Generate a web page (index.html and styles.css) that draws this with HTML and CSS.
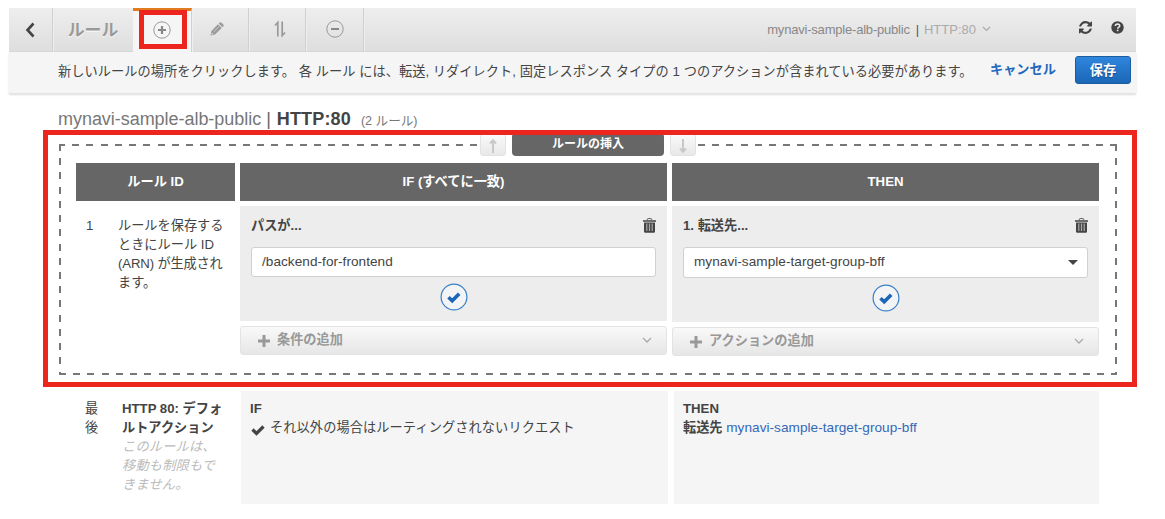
FILE: index.html
```html
<!DOCTYPE html>
<html lang="ja">
<head>
<meta charset="utf-8">
<title>ルール</title>
<link rel="stylesheet" href="styles.css">
</head>
<body>
<div class="page">
  <header class="toolbar">
    <div class="tab tab-back"><svg width="12" height="18" viewBox="0 0 12 18"><path d="M9.500 2.500 3.500 9l6 6.500" fill="none" stroke="#444" stroke-width="2.600"/></svg></div>
    <div class="tab tab-title">ルール</div>
    <div class="tab tab-active">
      <svg width="20" height="20" viewBox="0 0 20 20"><circle cx="10" cy="10" r="8.200" fill="none" stroke="#999" stroke-width="1"/><path d="M10 6v8M6 10h8" stroke="#888" stroke-width="2.200"/></svg>
      <span class="mark mark-tab"></span>
    </div>
    <div class="tab tab-edit"><svg width="14" height="14" viewBox="0 0 14 14"><path d="M.5 13.500 1.500 9 8 2.300 11.700 6 5 12.500z" fill="#999"/><path d="m8.800 1.600 1-1q.8-.6 1.600.1l1.900 1.900q.7.800.1 1.600l-1 1z" fill="#999"/><path d="M3.700 9.800 9 4.500" stroke="#ddd" stroke-width=".8"/><path d="m1.700 11.300 1 1" stroke="#eee" stroke-width="1.200"/></svg></div>
    <div class="tab tab-sort"><svg width="14" height="18" viewBox="0 0 14 18"><path d="M4.800 16.500V2.500L2 5.500M9.200 1.500v14l2.800-3" fill="none" stroke="#999" stroke-width="1.700"/></svg></div>
    <div class="tab tab-remove"><svg width="20" height="20" viewBox="0 0 20 20"><circle cx="10" cy="10" r="8.200" fill="none" stroke="#999" stroke-width="1"/><path d="M6 10h8" stroke="#888" stroke-width="2"/></svg></div>
    <div class="listener">
      <span class="lb">mynavi-sample-alb-public</span><span class="bar">|</span><span class="port">HTTP:80</span>
      <svg width="9" height="6" viewBox="0 0 9 6"><path d="m1 1 3.500 3.500L8 1" fill="none" stroke="#aaa" stroke-width="1.200"/></svg>
    </div>
    <svg class="refresh" width="13" height="13" viewBox="0 0 1536 1536"><path fill="#444" d="M1511 928q0 5-1 7-64 268-268 434.500t-478 166.500q-146 0-282.500-55t-243.500-157l-129 129q-19 19-45 19t-45-19-19-45v-448q0-26 19-45t45-19h448q26 0 45 19t19 45-19 45l-137 137q71 66 161 102t187 36q134 0 250-65t186-179q11-17 53-117 8-23 30-23h192q13 0 22.500 9.500t9.500 22.500zm25-800v448q0 26-19 45t-45 19h-448q-26 0-45-19t-19-45 19-45l138-138q-148-137-349-137-134 0-250 65t-186 179q-11 17-53 117-8 23-30 23h-199q-13 0-22.500-9.500t-9.500-22.500v-7q65-268 270-434.500t480-166.500q146 0 284 55.500t245 156.500l130-129q19-19 45-19t45 19 19 45z"/></svg>
    <svg class="help" width="13" height="13" viewBox="0 0 13 13"><circle cx="6.500" cy="6.500" r="6.200" fill="#444"/><path d="M4.300 5q.2-2 2.300-2 2.100.1 2.100 1.800 0 1-1.100 1.600-.9.500-.9 1.300" fill="none" stroke="#e9e9e9" stroke-width="1.600"/><path d="M5.800 8.700h1.700v1.500H5.800z" fill="#e9e9e9"/></svg>
  </header>

  <section class="notice">
    <p class="notice-text">新しいルールの場所をクリックします。 各 ルール には、転送, リダイレクト, 固定レスポンス タイプの 1 つのアクションが含まれている必要があります。</p>
    <a class="cancel">キャンセル</a>
    <button class="save">保存</button>
  </section>

  <h1 class="title"><span class="title-name">mynavi-sample-alb-public</span><span class="title-bar">|</span><b>HTTP:80</b><small>(2 ルール)</small></h1>

  <section class="insert">
    <span class="mark mark-insert"></span>
    <div class="insert-head">
      <span class="move"><svg width="10" height="16" viewBox="0 0 10 16"><path d="M5 15V2.500M2 5.500 5 2.300l3 3.200" fill="none" stroke="#c8c8c8" stroke-width="2"/></svg></span>
      <span class="insert-label">ルールの挿入</span>
      <span class="move"><svg width="10" height="16" viewBox="0 0 10 16"><path d="M5 1v12.500M2 10.500l3 3.200 3-3.200" fill="none" stroke="#c8c8c8" stroke-width="2"/></svg></span>
    </div>
    <div class="cols heads">
      <div>ルール ID</div><div>IF (すべてに一致)</div><div>THEN</div>
    </div>
    <div class="cols">
      <div class="rule-id"><span class="num">1</span><p>ルールを保存する<br>ときにルール ID<br><span class="arn">(ARN) が生成され</span><br>ます。</p></div>
      <div class="stack">
        <div class="editor">
          <div class="editor-top"><b>パスが...</b>
            <svg class="trash" width="13" height="15" viewBox="0 0 13 15"><path d="M4.300 2.200V1.500q0-.9.900-.9h2.600q.9 0 .9.900v.7" fill="none" stroke="#555"/><path d="M0 2.300h13v1.500H0zM1 4.500h11v9q0 1.200-1.200 1.200H2.200Q1 14.700 1 13.500z" fill="#444"/><path d="M3.800 5.500v7.500M6.500 5.500v7.500M9.200 5.500v7.500" stroke="#aaa" stroke-width="1.200"/></svg>
          </div>
          <div class="field">/backend-for-frontend</div>
          <svg class="confirm" width="28" height="28" viewBox="0 0 28 28"><circle cx="14" cy="14" r="12.900" fill="#f3f4f5" stroke="#3a80c8" stroke-width="1.200"/><path d="m8.500 14.200 3.700 3.500 7-7" fill="none" stroke="#1c67b8" stroke-width="3.600"/></svg>
        </div>
        <div class="add"><svg width="12" height="12" viewBox="0 0 12 12"><path d="M6 0v12M0 6h12" stroke="#999" stroke-width="3"/></svg><span>条件の追加</span><svg class="chev" width="10" height="7" viewBox="0 0 10 7"><path d="m1 1 4 4 4-4" fill="none" stroke="#aaa" stroke-width="1.300"/></svg></div>
      </div>
      <div class="stack stack-then">
        <div class="editor">
          <div class="editor-top"><b>1. 転送先...</b>
            <svg class="trash" width="13" height="15" viewBox="0 0 13 15"><path d="M4.300 2.200V1.500q0-.9.900-.9h2.600q.9 0 .9.900v.7" fill="none" stroke="#555"/><path d="M0 2.300h13v1.500H0zM1 4.500h11v9q0 1.200-1.200 1.200H2.200Q1 14.700 1 13.500z" fill="#444"/><path d="M3.800 5.500v7.500M6.500 5.500v7.500M9.200 5.500v7.500" stroke="#aaa" stroke-width="1.200"/></svg>
          </div>
          <div class="field">mynavi-sample-target-group-bff<span class="caret"></span></div>
          <svg class="confirm" width="28" height="28" viewBox="0 0 28 28"><circle cx="14" cy="14" r="12.900" fill="#f3f4f5" stroke="#3a80c8" stroke-width="1.200"/><path d="m8.500 14.200 3.700 3.500 7-7" fill="none" stroke="#1c67b8" stroke-width="3.600"/></svg>
        </div>
        <div class="add"><svg width="12" height="12" viewBox="0 0 12 12"><path d="M6 0v12M0 6h12" stroke="#999" stroke-width="3"/></svg><span>アクションの追加</span><svg class="chev" width="10" height="7" viewBox="0 0 10 7"><path d="m1 1 4 4 4-4" fill="none" stroke="#aaa" stroke-width="1.300"/></svg></div>
      </div>
    </div>
  </section>

  <section class="last">
    <div class="last-id"><span class="last-num">最<br>後</span><p><b>HTTP 80: デフォ<br>ルトアクション</b><br><em>このルールは、<br>移動も制限もで<br>きません。</em></p></div>
    <div class="last-cell"><b>IF</b><br><svg width="14" height="12" viewBox="0 0 14 12"><path d="m1.500 5.500 4 4L12.500 2.500" fill="none" stroke="#444" stroke-width="3.200"/></svg><span class="cond">それ以外の場合はルーティングされないリクエスト</span></div>
    <div class="last-cell last-then"><b>THEN</b><br><b>転送先</b> <a>mynavi-sample-target-group-bff</a></div>
  </section>
</div>
</body>
</html>
```
FILE: styles.css
```css
* { box-sizing: border-box; }
body {
  margin: 0;
  background: #fff;
  color: #444;
  font: 13.200px/19px "Liberation Sans", "Noto Sans CJK JP", sans-serif;
}
p { margin: 0; }
svg { display: block; flex: none; }
.page { width: 1165px; height: 519px; padding: 8px 0 0 9px; overflow: hidden; }

.toolbar {
  display: flex;
  width: 1127px;
  height: 44px;
  background: linear-gradient(#eee, #dedede);
  border-bottom: 1px solid #d8d8d8;
}
.tab {
  display: flex;
  align-items: center;
  justify-content: center;
  height: 43px;
  border-right: 1px solid #d0d0d0;
  box-shadow: 1px 0 #eee;
}
.tab-back { width: 44px; padding-right: 1px; }
.tab-title { width: 80px; padding-top: 2px; color: #999; font-size: 16.800px; font-weight: bold; text-shadow: 0 1px #fff; border-right: 0; box-shadow: none; }
.tab-active { position: relative; width: 59px; height: 44px; background: #f5f5f5; border-top: 3px solid #e07b20; padding-bottom: 4px; }
.tab-edit { width: 57px; padding: 0 6px 1px 0; }
.tab-sort { width: 57px; padding: 0 0 1px 6px; }
.tab-remove { width: 58px; padding: 0 0 1px; }
.mark { position: absolute; border: 5px solid #ec251f; pointer-events: none; }
.mark-tab { left: 6px; top: -1px; width: 48px; height: 39px; }
.listener { display: flex; align-items: center; margin-left: auto; font-size: 13px; letter-spacing: -.200px; color: #888; padding-bottom: 1px; }
.listener .bar { margin: 0 5px 0 6px; color: #555; }
.listener .port { color: #aaa; letter-spacing: 0; margin-right: 6px; }
.refresh { margin: 13px 0 0 88px; }
.help { margin: 13px 12px 0 19px; }

.notice {
  display: flex;
  width: 1127px;
  height: 42px;
  padding-left: 49px;
  background: #f5f5f5;
  border-bottom: 1px solid #e3e3e3;
  box-shadow: 0 1px 2px #ddd;
}
.notice-text { width: 932px; padding-top: 10px; white-space: nowrap; letter-spacing: .055px; }
.cancel { width: 85px; padding-top: 8px; color: #2468bd; font-weight: bold; }
.save {
  width: 56px;
  height: 28px;
  margin-top: 4px;
  padding: 0 0 2px;
  color: #fff;
  font: bold 13.200px "Liberation Sans", "Noto Sans CJK JP", sans-serif;
  text-shadow: 0 1px 1px #144a88;
  background: linear-gradient(#2f86dd, #1b66b7);
  border: 1px solid #1b5c9f;
  border-radius: 3px;
}

.title { display: flex; align-items: baseline; height: 24px; margin: 13px 0 0 49px; font-size: 18px; line-height: 24px; font-weight: normal; color: #444; }
.title-name { color: #777; letter-spacing: -.040px; }
.title-bar { margin: 0 6px 0 5px; color: #666; }
.title b { letter-spacing: .150px; }
.title small { margin-left: 10px; font-size: 12.600px; color: #777; }

.insert {
  position: relative;
  width: 1058px;
  height: 231px;
  margin: 13px 0 0 50px;
  padding: 19px 17px 0;
  background:
    repeating-linear-gradient(90deg, #777 0 7px, transparent 7px 14.220px) -1px 0 / 100% 2px no-repeat,
    repeating-linear-gradient(90deg, #777 0 7px, transparent 7px 14.220px) 0 100% / 100% 2px no-repeat,
    repeating-linear-gradient(#777 0 7px, transparent 7px 14.220px) 0 0 / 2px 100% no-repeat,
    repeating-linear-gradient(#777 0 7px, transparent 7px 14.220px) 100% 0 / 2px 100% no-repeat;
}
.mark-insert { left: -16px; top: -14px; width: 1094px; height: 257px; z-index: 2; }
.insert-head { position: absolute; left: 421px; top: -11px; display: flex; gap: 6px; height: 23px; background: #fff; }
.move { display: flex; align-items: center; justify-content: center; width: 26px; padding-top: 3px; background: linear-gradient(#fafafa, #e8e8e8); border: 1px solid #e3e3e3; border-radius: 3px; }
.insert-label { width: 152px; color: #fff; background: #666; border-radius: 4px; font-size: 12px; line-height: 23px; font-weight: bold; text-align: center; }
.cols { display: grid; grid-template-columns: 159px 427px 427px; column-gap: 5px; }
.heads { height: 38px; margin-bottom: 5px; color: #fff; font-weight: bold; line-height: 37px; text-align: center; }
.heads div { background: #666; }
.rule-id { display: grid; grid-template-columns: 32px 1fr; padding: 10px 0 0 10px; white-space: nowrap; }
.arn { letter-spacing: -.150px; }
.editor { height: 115px; padding: 10px 11px 0; background: #ededed; }
.stack-then .editor { height: 116px; }
.editor-top { display: flex; justify-content: space-between; height: 31px; }
.trash { margin-top: 2px; }
.field { position: relative; height: 30px; padding-left: 10px; background: #fff; border: 1px solid #d0d0d0; border-radius: 3px; font-size: 13.600px; letter-spacing: .040px; line-height: 28px; }
.stack-then .field { height: 31px; }
.caret { position: absolute; right: 9px; top: 12px; border: 5px solid transparent; border-top: 5px solid #444; border-bottom: 0; }
.confirm { margin: 6px auto 0; }
.add { display: flex; align-items: center; height: 29px; margin-top: 5px; padding: 0 14px 0 17px; color: #999; font-weight: bold; background: linear-gradient(#f9f9f9, #e6e6e6); border: 1px solid #e3e3e3; border-radius: 3px; }
.add span { margin: -3px auto 0 7px; }

.last { display: grid; grid-template-columns: 156px 427px 425px; column-gap: 6px; width: 1020px; height: 113px; margin: 16px 0 0 70px; }
.last-id { display: grid; grid-template-columns: 37px 1fr; padding: 8px 0 0 6px; white-space: nowrap; }
.last-id em { color: #bbb; letter-spacing: .200px; }
.last-cell { padding: 8px 9px; background: #f5f5f5; }
.last-cell svg { display: inline-block; margin: 0 5px -4px 1px; }
.cond { letter-spacing: .100px; }
.last-cell a { font-size: 13.600px; color: #3468b8; letter-spacing: .040px; }
```
